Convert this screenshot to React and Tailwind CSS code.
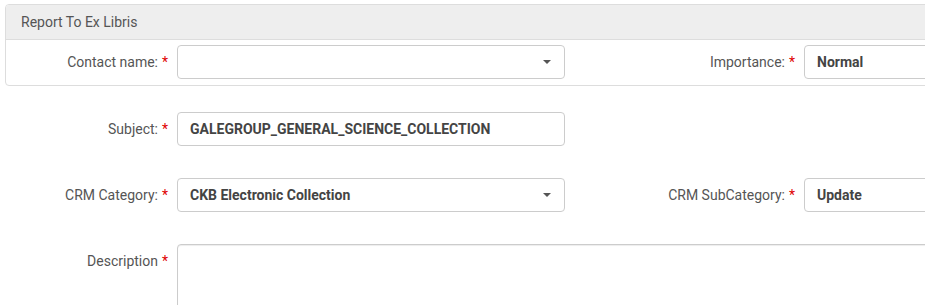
import React from "react";

function Label({ children, star = true, className = "" }) {
  return (
    <div className={`shrink-0 text-right text-[14px] text-[#555] ${className}`}>
      {children}
      {star && <span className="ml-[4px] text-[#e00000]">*</span>}
    </div>
  );
}

function Caret() {
  return (
    <span className="absolute right-[13px] top-1/2 -mt-[2px] h-0 w-0 border-x-[4px] border-t-[4px] border-x-transparent border-t-[#555]" />
  );
}

function Field({ value, select, className = "" }) {
  return (
    <div
      className={`relative flex h-[34px] shrink-0 items-center rounded-[4px] border border-[#ccc] bg-white pl-[12px] text-[14px] font-bold text-[#444] ${className}`}
    >
      {value}
      {select && <Caret />}
    </div>
  );
}

export default function App() {
  return (
    <div
      className="h-[305px] w-full overflow-hidden bg-white"
      style={{ fontFamily: "Roboto, 'Liberation Sans', sans-serif" }}
    >
      <div className="w-[1200px] pt-[4px]">
        {/* Panel */}
        <div className="ml-[5px] overflow-hidden rounded-[4px] border border-[#ddd]">
          <div className="flex h-[35px] items-center border-b border-[#ddd] bg-[#eeeeee] pl-[15px] text-[14px] text-[#555]">
            Report To Ex Libris
          </div>
          <div className="flex items-center pb-[6px] pt-[5px]">
            <Label className="w-[162px]">Contact name:</Label>
            <Field select className="ml-[9px] w-[388px]" />
            <Label className="w-[230px]">Importance:</Label>
            <Field value="Normal" className="ml-[9px] w-[200px]" />
          </div>
        </div>

        <div className="mt-[26px] flex items-center">
          <Label className="w-[168px]">Subject:</Label>
          <Field value="GALEGROUP_GENERAL_SCIENCE_COLLECTION" className="ml-[9px] w-[388px]" />
        </div>

        <div className="mt-[32px] flex items-center">
          <Label className="w-[168px]">CRM Category:</Label>
          <Field value="CKB Electronic Collection" select className="ml-[9px] w-[388px]" />
          <Label className="w-[230px]">CRM SubCategory:</Label>
          <Field value="Update" className="ml-[9px] w-[200px]" />
        </div>

        <div className="mt-[32px] flex items-start">
          <Label className="w-[168px] pt-[7px]">Description</Label>
          <div className="ml-[9px] h-[100px] w-[800px] shrink-0 rounded-[4px] border border-[#ccc] shadow-[inset_0_1px_1px_rgba(0,0,0,0.075)]" />
        </div>
      </div>
    </div>
  );
}
